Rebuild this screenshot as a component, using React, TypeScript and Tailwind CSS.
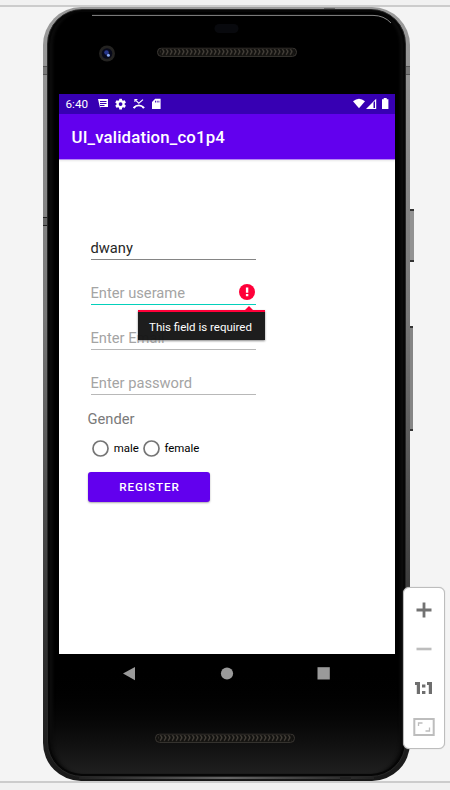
import React from "react";

function Speaker({ id }: { id: string }) {
  return (
    <svg width="140" height="10" viewBox="0 0 140 10" className="block">
      <defs>
        <pattern id={id} width="4" height="8" patternUnits="userSpaceOnUse">
          <path d="M1 1 L3 4 L1 7.5" fill="none" stroke="#48433c" strokeWidth="1.3" />
        </pattern>
      </defs>
      <rect x="0.5" y="0.5" width="139" height="8.4" rx="4" fill="#12110f" stroke="#3a3733" />
      <rect x="3" y="1.6" width="134" height="6.2" fill={`url(#${id})`} />
    </svg>
  );
}

function StatusBar() {
  return (
    <div className="flex h-5 items-center bg-[#3700b3] pl-[7px] pr-[6px] text-[11.7px] text-white">
      <span className="w-8 leading-5">6:40</span>
      <svg width="63" height="12" viewBox="0 0 63 12" fill="#fff" className="block">
        <path fillRule="evenodd" d="M0 1H10V9H2.2V10.8L0 1ZM2 3V4.1H8.5V3ZM2 5V6H8.5V5ZM2 7V8H6.5V7Z" />
        <g transform="translate(16.1 -0.4) scale(.54)">
          <path d="M19.43 12.98c.04-.32.07-.64.07-.98s-.03-.66-.07-.98l2.11-1.65c.19-.15.24-.42.12-.64l-2-3.46c-.12-.22-.39-.3-.61-.22l-2.49 1c-.52-.4-1.08-.73-1.69-.98l-.38-2.65A.49.49 0 0 0 14 2h-4c-.25 0-.46.18-.49.42l-.38 2.65c-.61.25-1.17.59-1.69.98l-2.49-1c-.23-.09-.49 0-.61.22l-2 3.46c-.13.22-.07.49.12.64l2.11 1.65c-.04.32-.07.65-.07.98s.03.66.07.98l-2.11 1.65c-.19.15-.24.42-.12.64l2 3.46c.12.22.39.3.61.22l2.49-1c.52.4 1.08.73 1.69.98l.38 2.65c.03.24.24.42.49.42h4c.25 0 .46-.18.49-.42l.38-2.65c.61-.25 1.17-.59 1.69-.98l2.49 1c.23.09.49 0 .61-.22l2-3.46c.12-.22.07-.49-.12-.64l-2.11-1.65zM12 15.5a3.5 3.5 0 1 1 0-7 3.5 3.5 0 0 1 0 7z" />
        </g>
        <path d="M37 1.6L40.8 5.2L45 1.6" fill="none" stroke="#fff" strokeWidth="1.1" />
        <path d="M36.4 1h3v1h-2v2h-1z" />
        <path d="M35.4 9.8Q40.8 4.9 46.2 9.8" fill="none" stroke="#fff" strokeWidth="1.5" />
        <path d="M35 9.4L37.9 7.6V9L36.5 10.8ZM46.6 9.4L43.7 7.6V9L45.1 10.8Z" />
        <path fillRule="evenodd" d="M57.2 .8H62.6V11H54V4ZM57 2.8V4.6H57.9V2.8ZM58.8 2.8V4.6H59.6V2.8ZM60.5 2.8V4.6H61.3V2.8Z" />
      </svg>
      <svg width="36" height="12" viewBox="0 0 36 12" fill="#fff" className="ml-auto block">
        <path d="M0 3.2Q6 -1.8 12 3.2L6 10.2Z" />
        <path fillRule="evenodd" d="M13 11L23.2 .8V11ZM20.5 4.5V10H22V3Z" />
        <path d="M30.7 0H33.7V1.2H35.4V11H29V1.2H30.7Z" />
      </svg>
    </div>
  );
}

const lineColors = {
  filled: "border-[#858585]",
  active: "border-[#03d0bb]",
  idle: "border-[#b8b8b8]",
};

function Field({ text, tone, filled, children }: { text: string; tone: keyof typeof lineColors; filled?: boolean; children?: React.ReactNode }) {
  return (
    <div className={`relative h-[22px] w-[165px] border-b text-[14.7px] leading-[21px] ${lineColors[tone]} ${filled ? "text-[#262626]" : "text-[#a4a4a4]"}`}>
      {text}
      {children}
    </div>
  );
}

function Radio({ label }: { label: string }) {
  return (
    <div className="flex items-start">
      <svg width="17" height="17" viewBox="0 0 17 17" className="block">
        <circle cx="8.5" cy="8.5" r="7.5" fill="none" stroke="#757575" strokeWidth="1.7" />
      </svg>
      <span className="ml-[4.6px] text-[11.45px] leading-4 text-black">{label}</span>
    </div>
  );
}

function Screen() {
  return (
    <div className="h-[560px] w-[336px] overflow-hidden bg-white">
      <StatusBar />
      <div className="flex h-[45px] items-center bg-[#6200ee] pl-[13px] pt-[2px] text-[16.8px] font-medium tracking-[0.15px] text-white shadow-[0_1px_0_#b68af2,0_2px_2px_#e8e8e8]">
        UI_validation_co1p4
      </div>
      <div className="flex flex-col pl-[29px] pt-[79px]">
        <div className="flex flex-col gap-[23px] pl-[3px]">
          <Field text="dwany" tone="filled" filled />
          <Field text="Enter userame" tone="active">
            <svg width="16" height="16" viewBox="0 0 16 16" className="absolute right-[1px] top-[1px]">
              <circle cx="8" cy="8" r="8" fill="#ff0039" />
              <path d="M6.9 3.4h2.4v5.4H6.9zM6.9 10h2.4v2.2H6.9z" fill="#fff" />
            </svg>
            <div className="absolute left-[47px] top-[27px] z-10 h-[29.5px] w-[127px] border-t-2 border-[#ff0039] bg-[#161616]/97 pr-[1px] text-center text-[11.5px] leading-[30px] text-white shadow-[0_1px_2px_#888888]">
              <svg width="10" height="5" viewBox="0 0 10 5" className="absolute -top-[6px] left-[106px]">
                <path d="M5 0L10 5H0Z" fill="#ff0039" />
              </svg>
              This field is required
            </div>
          </Field>
          <Field text="Enter Email" tone="idle" />
          <Field text="Enter password" tone="idle" />
        </div>
        <div className="mt-[14px] text-[14.7px] leading-5 text-[#7a7a7a]">Gender</div>
        <div className="mt-[11px] flex gap-1 pl-[4.6px]">
          <Radio label="male" />
          <Radio label="female" />
        </div>
        <button className="mt-[15px] h-[30px] w-[122px] rounded-[3px] bg-[#6200ee] pl-[2px] pt-[2px] text-[11.7px] font-medium tracking-[0.9px] text-white shadow-[0_1px_2px_#aaaaaa]">
          REGISTER
        </button>
      </div>
    </div>
  );
}

function Phone() {
  return (
    <div className="relative ml-[43px] h-[774px] w-[367px] rounded-[38px] bg-gradient-to-b from-[#9b9b9b] via-[#777777] via-40% to-[#181818] px-[4px] pb-[4px] pt-[2px]">
      <div className="absolute -right-[4px] top-[202px] h-[53px] w-[4px] border-y-2 border-[#333333] bg-[#929292]" />
      <div className="absolute -right-[3px] top-[319px] h-[105px] w-[3px] border-y-2 border-[#333333] bg-[#858585]" />
      <div className="absolute left-0 top-[59px] h-[9px] w-full border-y border-[#555555] bg-[#777777]" />
      <div className="absolute left-0 top-[210px] h-[9px] w-[5px] border-y border-[#222222] bg-[#666666]" />
      <div className="absolute left-[281px] top-[1px] h-[2px] w-[11px] bg-[#666666]" />
      <div className="absolute bottom-[2px] left-[36px] right-[36px] h-[2px] bg-gradient-to-r from-[#222222] via-[#666666] to-[#222222]" />
      <div className="absolute bottom-[1px] left-[297px] h-[3px] w-[11px] bg-[#222222]" />
      <div className="relative flex h-full w-full flex-col items-center rounded-[35px] border border-[#262626] bg-gradient-to-b from-black via-black via-85% to-[#202020] shadow-[inset_0_0_0_2px_#060606,inset_5px_0_3px_#0c0c0c,inset_-5px_0_3px_#0c0c0c]">
        <svg width="340" height="84" viewBox="57 10 340 84" className="block shrink-0">
          <path d="M92 15.4H373Q384 15.4 391 23" fill="none" stroke="#888" strokeWidth="1" />
          <rect x="214.5" y="24" width="24" height="9" rx="4.5" fill="#08090d" />
          <circle cx="107" cy="53.5" r="8" fill="#242321" />
          <circle cx="107" cy="53.5" r="5.3" fill="#07091a" />
          <circle cx="106.5" cy="52.5" r="2.3" fill="#26368c" />
          <circle cx="108.4" cy="55.2" r="1.5" fill="#8baaf3" />
          <g transform="translate(157 47.5)">
            <Speaker id="speaker-top" />
          </g>
        </svg>
        <div className="shrink-0">
          <Screen />
        </div>
        <svg width="336" height="100" viewBox="59 654 336 100" className="block shrink-0">
          <path d="M123 673.5L135 667V680.2Z" fill="#9a9a9a" />
          <circle cx="227" cy="673.5" r="6.1" fill="#9a9a9a" />
          <rect x="317.5" y="667.2" width="12.3" height="12.3" fill="#9a9a9a" />
          <g transform="translate(155 733.5)">
            <Speaker id="speaker-bottom" />
          </g>
        </svg>
      </div>
    </div>
  );
}

function ZoomControls() {
  return (
    <div className="absolute left-[403px] top-[587px] h-[162px] w-[42px] rounded-[6px] border border-[#bdbdbd] bg-white shadow-[0_0_1px_#bbbbbb]">
      <svg width="40" height="160" viewBox="404 588 40 160" className="block">
        <path d="M416.5 610H431.5M424 602.5V617.5" stroke="#727272" strokeWidth="2.8" />
        <path d="M416.5 649H431.5" stroke="#bdbdbd" strokeWidth="2.6" />
        <path d="M415 682H420V694H416.8V685H415ZM427 682H432V694H428.8V685H427ZM422 684.5H425.4V687.5H422ZM422 691H425.4V694H422Z" fill="#6e6e6e" />
        <rect x="414.3" y="719" width="19.4" height="16" fill="none" stroke="#bdbdbd" strokeWidth="2" />
        <path d="M418.5 726V723H422.5M429.5 727.5V731H425.5" fill="none" stroke="#bdbdbd" strokeWidth="1.3" />
      </svg>
    </div>
  );
}

export default function App() {
  return (
    <div className="relative h-[790px] w-[450px] overflow-hidden bg-[#f4f4f4] font-['Roboto',sans-serif]">
      <div className="h-[7px] border-b-2 border-[#cccccc] bg-[#f1f1f1]" />
      <Phone />
      <div className="h-[9px] border-t-2 border-[#cccccc] bg-[#f1f1f1]" />
      <ZoomControls />
    </div>
  );
}
